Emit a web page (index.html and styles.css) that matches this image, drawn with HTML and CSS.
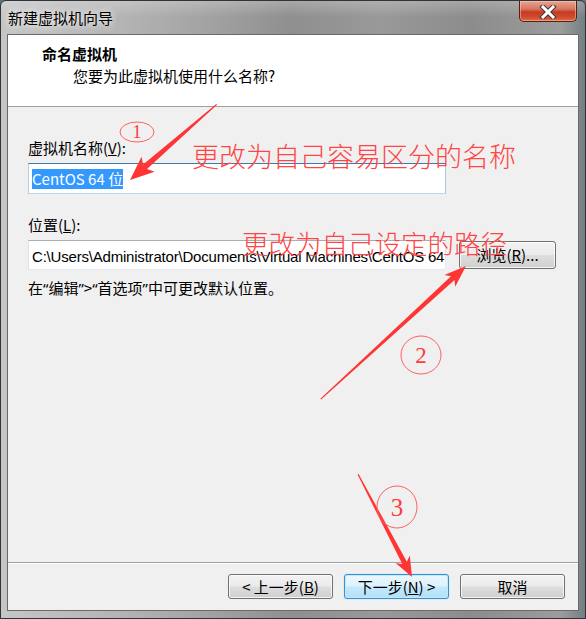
FILE: index.html
```html
<!DOCTYPE html>
<html lang="zh-CN">
<head>
<meta charset="utf-8">
<title>新建虚拟机向导</title>
<link rel="stylesheet" href="styles.css">
</head>
<body>
<div class="window">
  <div class="titlebar">
    <span class="title">新建虚拟机向导</span>
    <button class="close" aria-label="关闭">
      <svg width="18" height="14" viewBox="0 0 18 14">
        <path d="M4 2 L14 12 M14 2 L4 12" stroke="#3b3b3b" stroke-width="5" stroke-linecap="square" fill="none"/>
        <path d="M4 2 L14 12 M14 2 L4 12" stroke="#ffffff" stroke-width="3" stroke-linecap="square" fill="none"/>
      </svg>
    </button>
  </div>
  <div class="client">
    <div class="header">
      <div class="h-title">命名虚拟机</div>
      <div class="h-sub">您要为此虚拟机使用什么名称?</div>
    </div>
    <div class="content">
      <label class="label">虚拟机名称(<u>V</u>):</label>
      <div class="textbox focused"><span class="sel">CentOS 64 位</span></div>
      <label class="label loc">位置(<u>L</u>):</label>
      <div class="row">
        <div class="textbox path">C:\Users\Administrator\Documents\Virtual Machines\CentOS 64 位</div>
        <button class="btn browse">浏览(<u>R</u>)...</button>
      </div>
      <div class="hint">在<span class="q">“</span>编辑<span class="q">”</span>&gt;<span class="q">“</span>首选项<span class="q">”</span>中可更改默认位置。</div>
    </div>
    <div class="footer">
      <button class="btn">&lt; 上一步(<u>B</u>)</button>
      <button class="btn default">下一步(<u>N</u>) &gt;</button>
      <button class="btn">取消</button>
    </div>
  </div>
</div>

<svg class="marks" width="586" height="619" viewBox="0 0 586 619">
  <g fill="#ff3535">
    <g transform="translate(130,180) rotate(138.9)">
      <polygon points="-115,-0.6 -20,-3 -24,-10 0,0 -24,10 -20,3 -115,0.6"/>
    </g>
    <g transform="translate(466,266) rotate(-42.5)">
      <polygon points="-197,-0.6 -18,-2.6 -22,-8 0,0 -22,8 -18,2.6 -197,0.6"/>
    </g>
    <g transform="translate(412,577) rotate(62.3)">
      <polygon points="-116,-0.6 -16,-2.6 -20,-8 0,0 -20,8 -16,2.6 -116,0.6"/>
    </g>
  </g>
  <g fill="none" stroke="#ff6060" stroke-width="1">
    <ellipse cx="137" cy="132" rx="17" ry="10"/>
    <ellipse cx="421" cy="355" rx="20" ry="19"/>
    <ellipse cx="397" cy="507" rx="20" ry="21"/>
  </g>
  <g class="num" fill="#ff3b3b" text-anchor="middle">
    <text x="137" y="138" font-size="18">1</text>
    <text x="421" y="363" font-size="23">2</text>
    <text x="397" y="516" font-size="25">3</text>
  </g>
</svg>
<div class="note note1">更改为自己容易区分的名称</div>
<div class="note note2">更改为自己设定的路径</div>
</body>
</html>
```

FILE: styles.css
```css
* {
  box-sizing: border-box;
}

html,
body {
  margin: 0;
  padding: 0;
}

body {
  position: relative;
  width: 586px;
  height: 619px;
  overflow: hidden;
  background: #5f7179;
  font-family: "Noto Sans CJK SC", "Noto Sans", sans-serif;
  font-size: 15px;
  color: #000;
}

.window {
  width: 586px;
  height: 619px;
  display: flex;
  flex-direction: column;
  border: 1px solid #2f3537;
  border-radius: 6px 6px 0 0;
  padding: 0 6px 7px;
  background:
    linear-gradient(180deg, rgba(255, 255, 255, 0.22) 0px, rgba(255, 255, 255, 0) 16px),
    linear-gradient(90deg, #c6c6c6 0px, #b4b4b4 120px, #a4a4a4 200px, #8f8f8f 290px, #999 380px, #8c8c8c 470px, #9c9c9c 560px, #6f7c82 586px);
}

.titlebar {
  height: 33px;
  display: flex;
  justify-content: space-between;
  align-items: flex-start;
  padding-left: 1px;
}

.title {
  padding-top: 7px;
  line-height: 20px;
  font-size: 15px;
  color: #000;
  text-shadow: 0 0 6px rgba(255, 255, 255, 0.9), 0 0 10px rgba(255, 255, 255, 0.6);
}

.close {
  width: 58px;
  height: 21px;
  margin-right: 2px;
  padding: 0;
  border: 1px solid #5a1d14;
  border-top: 0;
  border-radius: 0 0 5px 5px;
  background: linear-gradient(180deg, #e8a493 0%, #d8765f 40%, #c53b22 55%, #cf4a2c 80%, #e06a44 100%);
  box-shadow: inset 0 0 0 1px rgba(255, 220, 200, 0.45);
  display: flex;
  align-items: center;
  justify-content: center;
}

.close svg {
  display: block;
  margin-top: 1px;
}

.client {
  flex: 1;
  display: flex;
  flex-direction: column;
  background: #f0f0f0;
  border: 1px solid #6a6a6a;
}

.header {
  height: 72px;
  background: #fff;
  border-bottom: 1px solid #a0a0a0;
  padding: 9px 0 0 34px;
}

.h-title {
  font-weight: bold;
  line-height: 20px;
}

.h-sub {
  line-height: 20px;
  margin-top: 2px;
  margin-left: 31px;
}

.content {
  flex: 1;
  padding: 31px 20px 0;
}

.label {
  display: block;
  line-height: 20px;
}

.textbox {
  display: flex;
  align-items: center;
  width: 418px;
  margin-top: 5px;
  padding: 0 3px;
  background: #fff;
  border: 1px solid;
  border-color: #abadb3 #e3e9ef #e3e9ef #e2e3ea;
  white-space: nowrap;
  overflow: hidden;
}

.textbox.focused {
  height: 31px;
  border-color: #3d7bad #a4c9e3 #b7d9ed #b5cfe7;
}

.sel {
  display: inline-block;
  line-height: 20px;
  background: #3399ff;
  color: #fff;
}

.loc {
  margin-top: 21px;
}

.row {
  display: flex;
  align-items: center;
  gap: 13px;
  margin-top: 5px;
}

.textbox.path {
  height: 30px;
  margin-top: 0;
  flex: none;
  font-family: "Liberation Sans", "Noto Sans CJK SC", sans-serif;
  letter-spacing: -0.2px;
}

.hint {
  margin-top: 8px;
  line-height: 20px;
}

.q {
  font-family: "Noto Sans", sans-serif;
}

.footer {
  display: flex;
  justify-content: flex-end;
  gap: 11px;
  padding: 11px 13px;
  border-top: 1px solid #a0a0a0;
  box-shadow: inset 0 1px 0 #fff;
}

.btn {
  width: 105px;
  height: 25px;
  padding: 0;
  font-family: inherit;
  font-size: 15px;
  line-height: 20px;
  color: #000;
  border: 1px solid #707070;
  border-radius: 3px;
  background: linear-gradient(180deg, #f2f2f2 0%, #ebebeb 48%, #dddddd 52%, #cfcfcf 100%);
  box-shadow: inset 0 0 0 1px rgba(255, 255, 255, 0.75);
}

.btn.browse {
  width: 97px;
  height: 28px;
}

.btn.default {
  border-color: #3c8fcf;
  background: linear-gradient(180deg, #ecf7fd 0%, #ddf2fd 48%, #c5e9fb 52%, #b2e0f7 100%);
  box-shadow: inset 0 0 0 1px #bfeafd, 0 0 1px #6ac3f0;
}

.marks {
  position: absolute;
  top: 0;
  left: 0;
  pointer-events: none;
}

.num {
  font-family: "Liberation Serif", "DejaVu Serif", serif;
}

.note {
  position: absolute;
  font-family: "Noto Sans CJK SC", sans-serif;
  font-weight: 300;
  line-height: 26px;
  color: #ff4545;
  white-space: nowrap;
  pointer-events: none;
}

.note1 {
  left: 192px;
  top: 143px;
  font-size: 27px;
}

.note2 {
  left: 242px;
  top: 230px;
  font-size: 26.5px;
}
```
